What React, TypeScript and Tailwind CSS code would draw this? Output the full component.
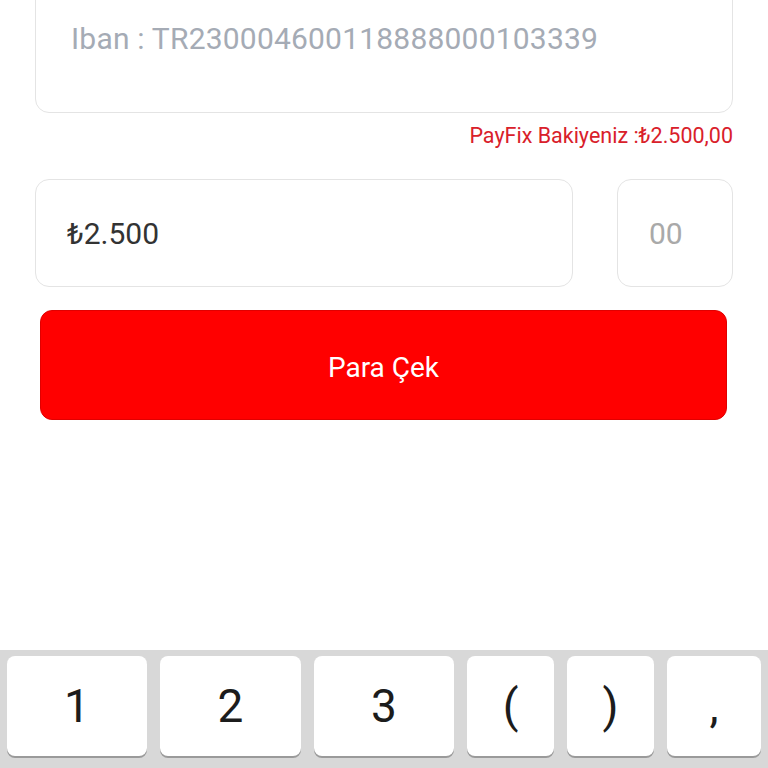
import React from "react";

const keys = [
  { label: "1", w: "w-[140px]" },
  { label: "2", w: "w-[141px]" },
  { label: "3", w: "w-[140px]" },
  { label: "(", w: "w-[87px]" },
  { label: ")", w: "w-[87px]" },
  { label: ",", w: "w-[94px]" },
];

export default function App() {
  return (
    <div
      className="h-screen w-full bg-white flex flex-col overflow-hidden"
      style={{ fontFamily: "Roboto, 'Noto Sans', sans-serif" }}
    >
      <div className="pl-[35px] pr-[35px]">
        <div className="-mt-[20px] h-[133px] rounded-[14px] border border-[#e4e4e4] pl-[35px] pt-[40px]">
          <span className="text-[30px] leading-[36px] tracking-[0.2px] text-[#a5abb5]">
            Iban : TR230004600118888000103339
          </span>
        </div>
        <div className="mt-[11px] flex justify-end">
          <span className="text-[21.5px] leading-[24px] text-[#d9202a]">
            PayFix Bakiyeniz :₺2.500,00
          </span>
        </div>
        <div className="mt-[31px] flex gap-[44px]">
          <div className="flex h-[108px] flex-1 items-center rounded-[14px] border border-[#e4e4e4] pl-[31px]">
            <span className="text-[30px] text-[#333333]">₺2.500</span>
          </div>
          <div className="flex h-[108px] w-[116px] items-center rounded-[14px] border border-[#e4e4e4] pl-[31px]">
            <span className="text-[30px] text-[#a9a9a9]">00</span>
          </div>
        </div>
      </div>
      <div className="mt-[23px] pl-[40px] pr-[41px]">
        <button className="flex h-[110px] w-full items-center justify-center rounded-[12px] border border-[#e00000] bg-[#ff0000] pt-[5px] text-[28px] font-normal text-white">
          Para Çek
        </button>
      </div>
      <div className="flex-1" />
      <div className="h-[118px] bg-[#d8d8d8] pl-[7px] pt-[6px]">
        <div className="flex gap-[13px]">
          {keys.map((k) => (
            <div
              key={k.label}
              className={`${k.w} flex h-[100px] items-center justify-center rounded-[8px] bg-white text-[46px] text-[#1c1c1c] shadow-[0_2px_0_#9a9a9a]`}
            >
              {k.label}
            </div>
          ))}
        </div>
      </div>
    </div>
  );
}
